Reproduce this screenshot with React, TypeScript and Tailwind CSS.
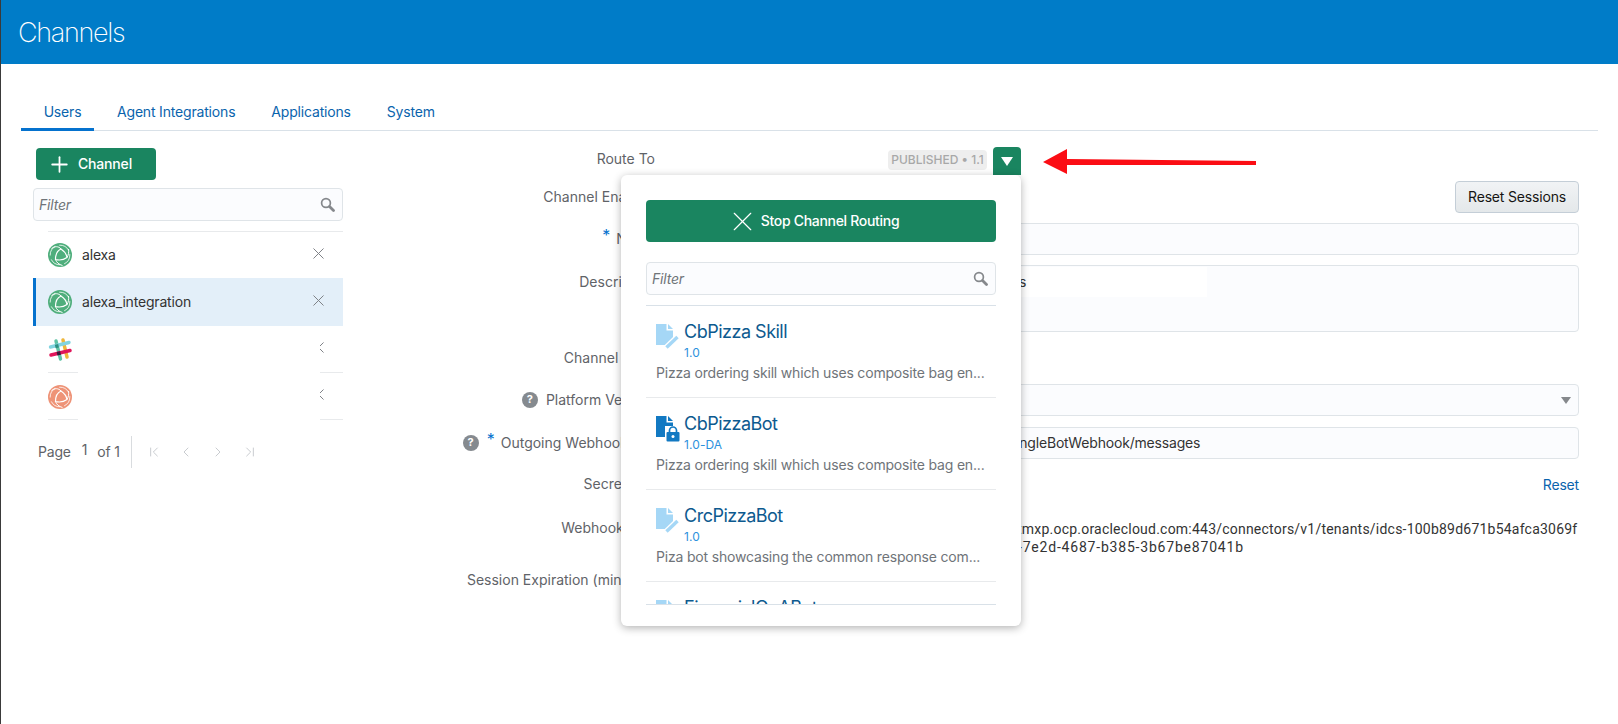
import { ChevronFirst, ChevronLast, ChevronLeft, ChevronRight, Plus, X } from "lucide-react";

const FONT = "font-['Inter','Liberation_Sans',sans-serif]";

function GlobeIcon({ color }: { color: string }) {
    return (
        <svg width="24" height="24" viewBox="0 0 24 24" className="shrink-0">
            <circle cx="12" cy="12" r="12" fill={color} />
            <circle cx="12" cy="12" r="9.8" fill="none" stroke="#fff" strokeWidth="0.8" strokeDasharray="11 4" />
            <path d="M7.5 16.5 C7.5 11 9.5 7.5 13 6 C16 8 18.5 11 19 14.5 C15.5 17 11.5 17.5 7.5 16.5 Z" fill="none" stroke="#fff" strokeWidth="1.2" />
            <path d="M13 6 C10.5 3 6.5 3 3.5 5.5 M19 14.5 C20.5 12 21 9 20.5 6 M7.5 16.5 C8.5 19.5 11 21.5 14.5 22.5" fill="none" stroke="#fff" strokeWidth="1" />
        </svg>
    );
}

function SlackIcon() {
    return (
        <svg width="24" height="24" viewBox="0 0 24 24" className="shrink-0">
            <path d="M8 3 L12.5 21" stroke="#5fc4a6" strokeWidth="3.4" strokeLinecap="round" />
            <path d="M15 2 L19 19" stroke="#eeb63b" strokeWidth="3.4" strokeLinecap="round" />
            <path d="M2.5 9 L21 4.5" stroke="#82d4e0" strokeWidth="3.4" strokeLinecap="round" />
            <path d="M3 17 L22 12.5" stroke="#e0165a" strokeWidth="3.4" strokeLinecap="round" />
            <rect x="9" y="13.6" width="3.6" height="3.6" fill="#3a1a3e" transform="rotate(-13 10.8 15.4)" />
            <rect x="7.2" y="6.4" width="3.4" height="3.4" fill="#2c8f80" transform="rotate(-13 9 8)" />
        </svg>
    );
}

function SkillIcon() {
    return (
        <svg width="24" height="26" viewBox="0 0 24 26" className="shrink-0">
            <path d="M0 0 H10.5 V6.5 H17 V21 H0 Z" fill="#a5d7f6" />
            <path d="M12 0 L17 5 H12 Z" fill="#a5d7f6" />
            <path d="M10 24 L21.5 13" stroke="#fff" strokeWidth="6" />
            <path d="M10.5 23.5 L21.5 13" stroke="#a5d7f6" strokeWidth="3.4" />
        </svg>
    );
}

function LockedSkillIcon() {
    return (
        <svg width="24" height="26" viewBox="0 0 24 26" className="shrink-0">
            <path d="M0 0 H10.5 V6.5 H17 V21 H0 Z" fill="#1279c2" />
            <path d="M12 0 L17 5 H12 Z" fill="#1279c2" />
            <rect x="9" y="10" width="15" height="16" fill="#fff" />
            <rect x="10.5" y="16" width="13" height="9.5" rx="1" fill="#1279c2" />
            <path d="M13.5 16.5 V14.5 a3.5 3.5 0 0 1 7 0 V16.5" fill="none" stroke="#1279c2" strokeWidth="1.7" />
            <circle cx="17" cy="20.5" r="1.5" fill="#fff" />
        </svg>
    );
}

function SearchIcon() {
    return (
        <svg width="15" height="15" viewBox="0 0 15 15" className="shrink-0">
            <circle cx="6" cy="6" r="4.4" fill="none" stroke="#85888c" strokeWidth="1.7" />
            <path d="M9.5 9.5 L13.5 13.5" stroke="#85888c" strokeWidth="2.8" strokeLinecap="round" />
        </svg>
    );
}

function HelpIcon() {
    return (
        <span className="w-4 h-4 rounded-full bg-[#858a8f] text-white text-[11px] font-bold flex items-center justify-center shrink-0">?</span>
    );
}

function FilterBox({ className }: { className: string }) {
    return (
        <div className={`flex items-center justify-between border border-[#dfe4e8] rounded-sm bg-[#fbfcfe] pl-[5px] pr-[7px] ${className}`}>
            <span className="italic text-sm text-[#6f7479]">Filter</span>
            <SearchIcon />
        </div>
    );
}

function ChannelRow({ name, icon, selected, masked, height }: { name?: string; icon: React.ReactNode; selected?: boolean; masked?: boolean; height: string }) {
    return (
        <div className={`relative flex items-center ${height} ${selected ? "bg-[#e3eff9] border-l-[3px] border-[#0572ce] pl-3" : "ml-[15px]"} ${masked ? "border-b border-[#e8eaec] pt-[2px]" : ""}`}>
            {icon}
            {name && <span className="ml-[10px] text-sm text-[#333]">{name}</span>}
            <X size={19} strokeWidth={1.25} className={`absolute text-[#7d8186] ${selected ? "left-[273px] top-[13px]" : "left-[261px] top-[12px]"}`} />
            {/* the names of these two rows are blanked out in the picture */}
            {masked && <div className="absolute left-[30px] w-[242px] top-0 -bottom-px bg-white" />}
        </div>
    );
}

function SkillRow({ title, version, desc, icon }: { title: string; version: string; desc: string; icon: React.ReactNode }) {
    return (
        <div className="h-[92px] border-b border-[#e8eaec] pl-[10px] pt-[18px] shrink-0">
            <div className="flex gap-[4px]">
                {icon}
                <div className="-mt-[2px]">
                    <div className="text-[18px] leading-[20px] tracking-[-0.5px] text-[#0d5a8f]">{title}</div>
                    <div className="text-xs leading-[16px] mt-[3px] tracking-[0.1px] text-[#2b91dd]">{version}</div>
                </div>
            </div>
            <div className="text-sm leading-[18px] text-[#6f7479] mt-[3px] whitespace-nowrap">{desc}</div>
        </div>
    );
}

function Label({ text, required, help, className }: { text: string; required?: boolean; help?: boolean; className?: string }) {
    return (
        <div className={`w-[312px] shrink-0 flex justify-end items-center text-sm tracking-[0px] text-[#5f6368] whitespace-nowrap ${className ?? ""}`}>
            {help && <span className="mr-[8px]"><HelpIcon /></span>}
            {required && <span className="text-[#0572ce] text-base leading-none mr-[6px] -mt-2">*</span>}
            {text}
        </div>
    );
}

export default function App() {
    const inputBox = "border border-[#dfe4e8] rounded-sm bg-[#fbfcfe]";

    return (
        <div className={`relative h-[724px] overflow-hidden bg-white border-l border-[#3a3a3a] tracking-[-0.18px] ${FONT}`}>
            <div className="h-16 bg-[#007cc8] flex items-center pl-[17px] pt-[3px]">
                <h1 className="text-[27px] font-extralight tracking-[-1.3px] text-white">Channels</h1>
            </div>

            <div className="mx-5 mt-[29px] h-[38px] flex border-b border-[#d9e1e8] text-sm text-[#0a64ad]">
                <div className="w-[73px] h-[38px] border-b-[3px] border-[#0572ce] flex justify-center pl-[10px] pt-[9px]">Users</div>
                <div className="ml-[23px] pt-[9px]">Agent Integrations</div>
                <div className="ml-[36px] pt-[9px]">Applications</div>
                <div className="ml-[36px] pt-[9px]">System</div>
            </div>

            <div className="flex mt-4">
                <div className="w-[310px] ml-8 shrink-0 pt-px">
                    <button className="ml-[3px] w-[120px] h-8 bg-[#1a8560] rounded-sm flex items-center text-white text-sm font-medium pl-[11px]">
                        <Plus size={25} strokeWidth={1.7} />
                        <span className="ml-[6px]">Channel</span>
                    </button>
                    <FilterBox className="h-[33px] mt-2" />
                    <div className="mt-[10px] ml-[15px] border-t border-[#e8eaec]" />
                    <ChannelRow name="alexa" icon={<GlobeIcon color="#4fae7c" />} height="h-[46px]" />
                    <ChannelRow name="alexa_integration" icon={<GlobeIcon color="#4fae7c" />} selected height="h-[48px]" />
                    <ChannelRow icon={<SlackIcon />} masked height="h-[47px]" />
                    <ChannelRow icon={<GlobeIcon color="#ee9377" />} masked height="h-[47px]" />
                    <div className="flex items-center h-8 mt-4 text-sm text-[#5f6368]">
                        <span className="ml-[5px]">Page</span>
                        <span className="ml-[11px] -mt-1">1</span>
                        <span className="ml-[10px]">of 1</span>
                        <div className="w-px h-8 bg-[#d9dcdf] ml-[11px]" />
                        <div className="flex text-[#c9ccd0] ml-[14px] gap-[16px]">
                            <ChevronFirst size={16} strokeWidth={1.5} />
                            <ChevronLeft size={16} strokeWidth={1.5} />
                            <ChevronRight size={16} strokeWidth={1.5} />
                            <ChevronLast size={16} strokeWidth={1.5} />
                        </div>
                    </div>
                </div>

                <div className="relative w-[1236px] shrink-0">
                    <div className="flex h-[30px]">
                        <Label text="Route To" className="h-6" />
                    </div>
                    <div className="flex h-[46px] items-start">
                        <Label text="Channel Enabled" className="h-[40px]" />
                        <div className="flex-1 flex justify-end pt-1">
                            <button className="w-[124px] h-[32px] border border-[#c4ced7] rounded-sm bg-gradient-to-b from-[#f1f3f5] to-[#e4e8ea] text-sm text-[#161513]">Reset Sessions</button>
                        </div>
                    </div>
                    <div className="flex h-[42px] items-start">
                        <Label text="Name" required className="h-[32px]" />
                        <div className={`flex-1 ml-[15px] h-8 ${inputBox}`} />
                    </div>
                    <div className="flex h-[81px] items-start">
                        <Label text="Description" className="h-[34px]" />
                        <div className={`flex-1 ml-[15px] h-[67px] ${inputBox} pt-px pl-[4px]`}>
                            <div className="w-[532px] h-[30px] bg-white pl-[344px] text-sm leading-[30px] text-[#333]">s</div>
                        </div>
                    </div>
                    <div className="flex h-[38px] items-start">
                        <Label text="Channel Type" className="h-[24px]" />
                    </div>
                    <div className="flex h-[43px] items-start">
                        <Label text="Platform Version" help className="h-8" />
                        <div className={`relative flex-1 ml-[15px] h-8 ${inputBox}`}>
                            <div className="absolute right-[7px] top-[12px] w-0 h-0 border-x-[5px] border-x-transparent border-t-[7px] border-t-[#85888c]" />
                        </div>
                    </div>
                    <div className="flex h-[42px] items-start">
                        <Label text="Outgoing Webhook URI" required help className="h-8" />
                        <div className={`flex-1 ml-[15px] h-8 ${inputBox} pl-[345px] text-sm leading-[30px] text-[#333] whitespace-nowrap`}>ingleBotWebhook/messages</div>
                    </div>
                    <div className="flex h-[44px] items-start">
                        <Label text="Secret Key" className="h-[30px]" />
                        <div className="flex-1 h-[32px] flex items-center justify-end text-sm text-[#0a64ad]">Reset</div>
                    </div>
                    <div className="flex h-[52px] items-start">
                        <Label text="Webhook URL" className="h-[30px]" />
                        <div className="flex-1 ml-[15px] pl-[347px] pt-[7px] font-['Roboto',sans-serif] text-sm leading-[18px] text-[#333] whitespace-nowrap">
                            <div className="tracking-[0.22px]">tmxp.ocp.oraclecloud.com:443/connectors/v1/tenants/idcs-100b89d671b54afca3069f</div>
                            <div className="pl-[1px] tracking-[0.8px]">-7e2d-4687-b385-3b67be87041b</div>
                        </div>
                    </div>
                    <div className="flex items-start">
                        <Label text="Session Expiration (minutes)" className="h-[30px]" />
                    </div>

                    {/* Route To control and its dropdown sit over the form */}
                    <div className="absolute left-[545px] top-0 flex items-start gap-[6px]">
                        <span className="w-[99px] h-5 mt-[3px] bg-[#eeeeee] rounded-sm text-xs font-medium tracking-[0px] text-[#a8a8a8] leading-5 text-center whitespace-nowrap">PUBLISHED • 1.1</span>
                        <button className="w-[28px] h-[28px] bg-[#1a8560] rounded-t-sm flex items-center justify-center">
                            <span className="w-0 h-0 border-x-[6px] border-x-transparent border-t-[9px] border-t-white" />
                        </button>
                    </div>
                    <div className="absolute left-[278px] top-[28px] w-[400px] h-[451px] bg-white rounded-md shadow-[0_2px_8px_rgba(0,0,0,0.3)] px-[25px] pt-[25px]">
                        <button className="w-full h-[42px] bg-[#1a8560] rounded-sm flex items-center justify-center text-white text-sm font-medium tracking-[-0.3px] pr-[17px]">
                            <X size={33} strokeWidth={0.85} className="mr-[2px]" />
                            Stop Channel Routing
                        </button>
                        <FilterBox className="h-[33px] mt-5" />
                        <div className="mt-[10px] h-[300px] border-y border-[#d9e1e8] overflow-hidden flex flex-col">
                            <SkillRow title="CbPizza Skill" version="1.0" desc="Pizza ordering skill which uses composite bag en..." icon={<SkillIcon />} />
                            <SkillRow title="CbPizzaBot" version="1.0-DA" desc="Pizza ordering skill which uses composite bag en..." icon={<LockedSkillIcon />} />
                            <SkillRow title="CrcPizzaBot" version="1.0" desc="Piza bot showcasing the common response com..." icon={<SkillIcon />} />
                            <SkillRow title="FinancialQnABot" version="" desc="" icon={<SkillIcon />} />
                        </div>
                    </div>
                </div>
            </div>

            {/* annotation arrow */}
            <svg width="220" height="30" viewBox="0 0 220 30" className="absolute left-[1040px] top-[147px]">
                <path d="M2 15 L26 2 L26 12 L215 14 L215 18 L26 18 L26 27 Z" fill="#fb0d14" />
            </svg>
        </div>
    );
}
